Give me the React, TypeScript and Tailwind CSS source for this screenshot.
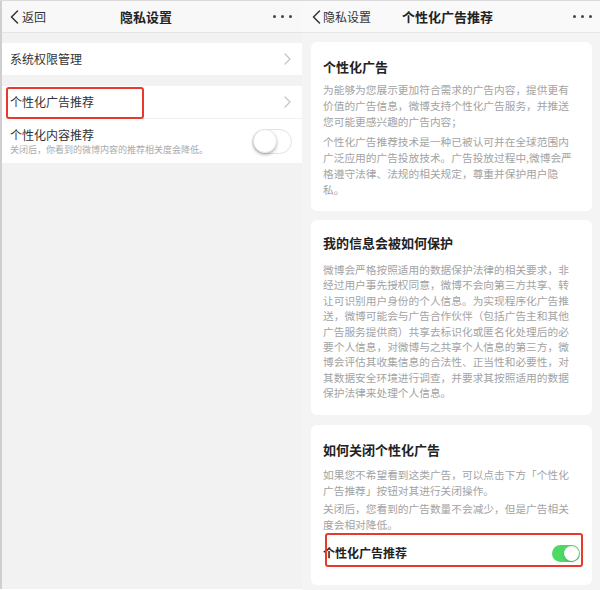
import React from "react";

function BackChevron() {
  return (
    <svg width="9" height="14" viewBox="0 0 9 14" fill="none">
      <polyline points="7.5,1 1.5,7 7.5,13" stroke="#333" strokeWidth="1.5" strokeLinecap="round" strokeLinejoin="round" />
    </svg>
  );
}

function RowChevron() {
  return (
    <svg width="7" height="12" viewBox="0 0 7 12" fill="none">
      <polyline points="1,1 6,6 1,11" stroke="#c4c4c8" strokeWidth="1.2" strokeLinecap="round" strokeLinejoin="round" />
    </svg>
  );
}

function Dots() {
  return (
    <div className="flex items-center gap-[5px]">
      <span className="w-[3px] h-[3px] rounded-full bg-[#444]" />
      <span className="w-[3px] h-[3px] rounded-full bg-[#444]" />
      <span className="w-[3px] h-[3px] rounded-full bg-[#444]" />
    </div>
  );
}

function Lines({ lines }: { lines: string[] }) {
  return (
    <div>
      {lines.map((l, i) => (
        <div key={i} className="whitespace-nowrap">
          {l}
        </div>
      ))}
    </div>
  );
}

export default function App() {
  return (
    <div className="w-[600px] h-[590px] flex overflow-hidden bg-white border-t border-[#dadada] font-['Noto_Sans_CJK_SC',sans-serif]">
      {/* Left panel */}
      <div className="w-[302px] h-[588px] flex flex-col bg-[#f2f2f2] border-l-2 border-[#cfcfcf]">
        <div className="h-[32px] shrink-0 grid grid-cols-[118px_auto_1fr] items-center bg-[#f8f8f8] border-b border-[#e4e4e4]">
          <div className="flex items-center pl-[8px] gap-[3px]">
            <BackChevron />
            <span className="text-[12px] leading-none text-[#333]">返回</span>
          </div>
          <div className="text-[13px] font-bold leading-none text-[#222]">隐私设置</div>
          <div className="flex justify-end pr-[10px]">
            <Dots />
          </div>
        </div>
        <div className="h-[10px] shrink-0" />
        <div className="h-[32px] shrink-0 bg-white flex items-center justify-between pl-[8px] pr-[11px]">
          <span className="text-[12px] text-[#333]">系统权限管理</span>
          <RowChevron />
        </div>
        <div className="h-[11px] shrink-0" />
        <div className="relative h-[32px] shrink-0 bg-white flex items-center justify-between pl-[8px] pr-[11px]">
          <span className="text-[12px] text-[#333]">个性化广告推荐</span>
          <RowChevron />
          <div className="absolute left-[4px] top-[1px] w-[138px] h-[32px] border-2 border-[#e8392c] rounded-[3px]" />
        </div>
        <div className="h-[45px] shrink-0 bg-white border-t border-[#f0f0f0] flex items-center justify-between pl-[8px] pr-[10px]">
          <div className="flex flex-col">
            <span className="text-[12px] leading-[17px] text-[#333]">个性化内容推荐</span>
            <span className="text-[9px] leading-[13px] text-[#aaa]">关闭后，你看到的微博内容的推荐相关度会降低。</span>
          </div>
          <div className="w-[40px] h-[25px] rounded-full bg-white border border-[#e3e3e3] flex items-center">
            <span className="w-[24px] h-[24px] rounded-full bg-white shadow-[0_2px_3px_rgba(0,0,0,0.25)] border border-[#e6e6e6]" />
          </div>
        </div>
      </div>

      {/* Right panel */}
      <div className="flex-1 h-[589px] flex flex-col bg-[#f4f4f4]">
        <div className="h-[32px] shrink-0 grid grid-cols-[100px_auto_1fr] items-center bg-[#f9f9f9] border-b border-[#e6e6e6]">
          <div className="flex items-center pl-[10px] gap-[2px]">
            <BackChevron />
            <span className="text-[12px] leading-none text-[#333]">隐私设置</span>
          </div>
          <div className="text-[13px] font-bold leading-none text-[#222]">个性化广告推荐</div>
          <div className="flex justify-end pr-[8px]">
            <Dots />
          </div>
        </div>

        <div className="flex flex-col pl-[9px] pr-[8px] pt-[9px] gap-[9px]">
          {/* Card 1 */}
          <div className="bg-white rounded-[6px] px-[12px] pt-[16px] pb-[13px] h-[169px]">
            <div className="text-[13px] font-bold leading-[18px] text-[#222]">个性化广告</div>
            <div className="mt-[6px] text-[10.7px] leading-[16px] text-[#a3a3a3] flex flex-col gap-[4px]">
              <Lines
                lines={[
                  "为能够为您展示更加符合需求的广告内容，提供更有",
                  "价值的广告信息，微博支持个性化广告服务，并推送",
                  "您可能更感兴趣的广告内容；",
                ]}
              />
              <Lines
                lines={[
                  "个性化广告推荐技术是一种已被认可并在全球范围内",
                  "广泛应用的广告投放技术。广告投放过程中,微博会严",
                  "格遵守法律、法规的相关规定，尊重并保护用户隐",
                  "私。",
                ]}
              />
            </div>
          </div>

          {/* Card 2 */}
          <div className="bg-white rounded-[6px] px-[12px] pt-[14px] h-[195px]">
            <div className="text-[13px] font-bold leading-[18px] text-[#222]">我的信息会被如何保护</div>
            <div className="mt-[10px] text-[10.7px] leading-[15.4px] text-[#a3a3a3]">
              <Lines
                lines={[
                  "微博会严格按照适用的数据保护法律的相关要求，非",
                  "经过用户事先授权同意，微博不会向第三方共享、转",
                  "让可识别用户身份的个人信息。为实现程序化广告推",
                  "送，微博可能会与广告合作伙伴（包括广告主和其他",
                  "广告服务提供商）共享去标识化或匿名化处理后的必",
                  "要个人信息，对微博与之共享个人信息的第三方，微",
                  "博会评估其收集信息的合法性、正当性和必要性，对",
                  "其数据安全环境进行调查，并要求其按照适用的数据",
                  "保护法律来处理个人信息。",
                ]}
              />
            </div>
          </div>

          {/* Card 3 */}
          <div className="relative bg-white rounded-[6px] px-[12px] pt-[16px] h-[160px] mt-[1px]">
            <div className="text-[13px] font-bold leading-[18px] text-[#222]">如何关闭个性化广告</div>
            <div className="mt-[8px] text-[10.7px] leading-[15.5px] text-[#a3a3a3] flex flex-col gap-[3px]">
              <Lines
                lines={[
                  "如果您不希望看到这类广告，可以点击下方「个性化",
                  "广告推荐」按钮对其进行关闭操作。",
                ]}
              />
              <Lines
                lines={[
                  "关闭后，您看到的广告数量不会减少，但是广告相关",
                  "度会相对降低。",
                ]}
              />
            </div>
            <div className="mt-[4px] h-[34px] flex items-center justify-between">
              <span className="text-[12px] font-bold text-[#222]">个性化广告推荐</span>
              <div className="w-[28px] h-[17px] rounded-full bg-[#4cd964] flex items-center justify-end pr-[1px]">
                <span className="w-[15px] h-[15px] rounded-full bg-white shadow-[0_1px_2px_rgba(0,0,0,0.2)]" />
              </div>
            </div>
            <div className="absolute left-[14px] top-[108px] w-[258px] h-[34px] border-2 border-[#e8392c] rounded-[3px]" />
          </div>
        </div>
      </div>
    </div>
  );
}
